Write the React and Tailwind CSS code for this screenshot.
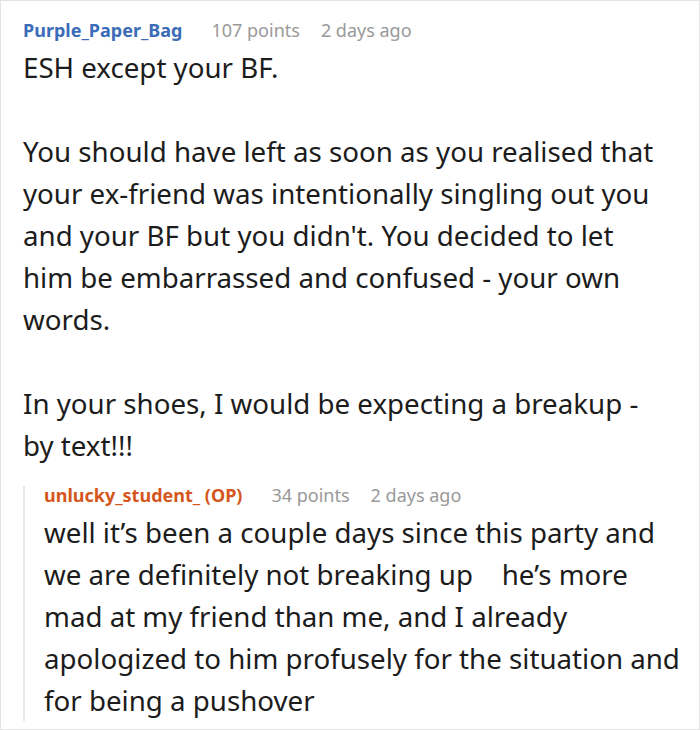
import React from 'react';

const comment = {
  author: 'Purple_Paper_Bag',
  points: '107 points',
  time: '2 days ago',
  // lines broken where the original column wraps them
  paragraphs: [
    ['ESH except your BF.'],
    [
      'You should have left as soon as you realised that',
      'your ex-friend was intentionally singling out you',
      "and your BF but you didn't. You decided to let",
      'him be embarrassed and confused - your own',
      'words.',
    ],
    ['In your shoes, I would be expecting a breakup -', 'by text!!!'],
  ],
};

const reply = {
  author: 'unlucky_student_ (OP)',
  points: '34 points',
  time: '2 days ago',
  text: 'well it\u2019s been a couple days since this party and we are definitely not breaking up \u00a0\u00a0\u00a0he\u2019s more mad at my friend than me, and I already apologized to him profusely for the situation and for being a pushover',
};

const Meta = ({ author, points, time, authorClass, lineClass }) => (
  <div className={`flex items-baseline text-[18px] ${lineClass}`}>
    <span className={`font-bold ${authorClass}`}>{author}</span>
    <span className="ml-[29px] text-[#999999]">{points}</span>
    <span className="ml-[21px] text-[#999999]">{time}</span>
  </div>
);

const App = () => {
  return (
    <div className="w-[700px] h-[730px] border border-[#e4e4e4] bg-white overflow-hidden font-['Noto_Sans',sans-serif] text-[#1c1c1c]">
      <div className="pl-[22px] pr-[10px] pt-[16px]">
        <Meta {...comment} authorClass="text-[#3b6cb7]" lineClass="leading-[26px]" />
        <div className="mt-[3px] text-[27.7px] leading-[42px]">
          {comment.paragraphs.map((lines, i) => (
            <p key={i} className={`whitespace-nowrap ${i > 0 ? 'mt-[42px]' : ''}`}>
              {lines.map((line, j) => (
                <React.Fragment key={j}>
                  {j > 0 && <br />}
                  {line}
                </React.Fragment>
              ))}
            </p>
          ))}
        </div>

        <div className="mt-[20px] border-l-2 border-[#e6e6e6] pl-[19px]">
          <Meta {...reply} authorClass="text-[#d5561d]" lineClass="leading-[18px]" />
          <p className="mt-[7px] text-[27.7px] leading-[42px]">{reply.text}</p>
        </div>
      </div>
    </div>
  );
};

export default App;
